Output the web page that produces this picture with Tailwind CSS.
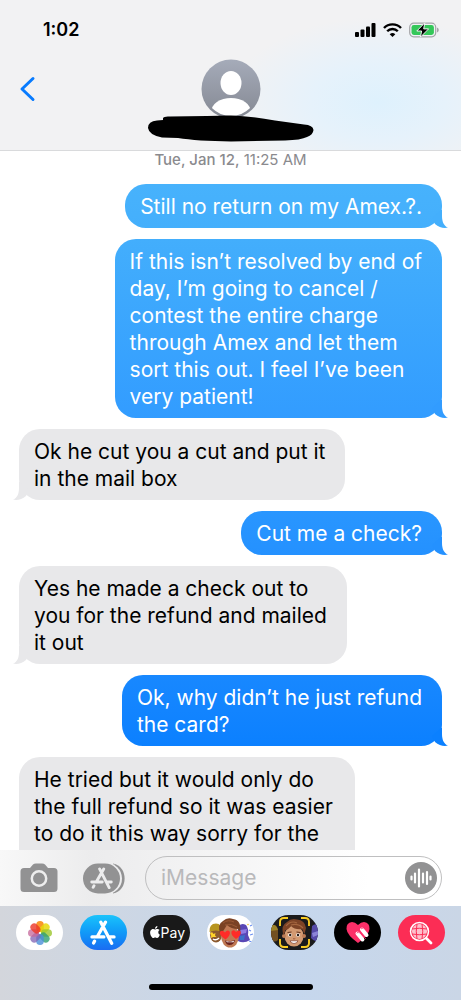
<!DOCTYPE html>
<html lang="en">
<head>
  <meta charset="UTF-8" />
  <meta name="viewport" content="width=device-width, initial-scale=1.0" />
  <title>Messages</title>
  <script src="https://cdn.jsdelivr.net/npm/@tailwindcss/browser@4"></script>
</head>
<body class="flex h-screen flex-col overflow-hidden bg-white font-['Inter',sans-serif] text-black">
  <!-- Shared shapes -->
  <svg class="hidden">
    <symbol id="tail" viewBox="0 0 16 18">
      <path d="M9 0H10V6C10 12 12 16 16 17.600C11.500 18.800 7 17.200 3 14L0 8Z" fill="currentColor" />
    </symbol>
    <symbol id="store" viewBox="0 0 24 24">
      <g fill="none" stroke="currentColor" stroke-width="3" stroke-linecap="round">
        <path d="M10 2L20 21.500M14.300 2L6.800 15.200M1.800 15.600H12.800M17.500 15.600H22.200M4.200 19.500L3.300 21.200" />
      </g>
    </symbol>
  </svg>

  <!-- Header -->
  <header class="shrink-0 border-b border-[#d9dadc] bg-[#f2f2f3] bg-[radial-gradient(ellipse_150px_85px_at_82%_68%,#def1fd_0%,#e6f2fb_45%,#f2f2f300_100%)]">
    <div class="flex h-[59px] items-center justify-between pr-[22px] pl-[43px]">
      <time class="text-[18px] font-semibold">1:02</time>
      <div class="flex items-center gap-[7px]">
        <svg class="h-[14px] w-[21px]" viewBox="0 0 21 14">
          <rect x="0" y="9" width="4" height="5" rx="1" />
          <rect x="5.500" y="6.500" width="4" height="7.500" rx="1" />
          <rect x="11" y="3.500" width="4" height="10.500" rx="1" />
          <rect x="16.500" y="0" width="4" height="14" rx="1" />
        </svg>
        <svg class="h-[14px] w-[19px]" viewBox="0 0 19 14">
          <g fill="none" stroke="#000" stroke-width="2.400">
            <path d="M1 5C5.500 .2 13.500 .2 18 5" />
            <path d="M4.200 8.300C7 5.300 12 5.300 14.800 8.300" />
          </g>
          <path d="M9.500 14L6.700 11.200Q9.500 8.600 12.300 11.200Z" />
        </svg>
        <svg class="h-[16px] w-[30px]" viewBox="0 0 30 16">
          <rect x=".7" y="1.200" width="26" height="13.600" rx="4" fill="none" stroke="#a4a5a8" stroke-width="1.200" />
          <rect x="2.500" y="3" width="22.400" height="10" rx="2.400" fill="#34c759" />
          <path d="M28 5.600Q29.800 6.300 29.800 8T28 10.400Z" fill="#a4a5a8" />
          <path d="M15.800 .8L7.800 9H12.600L11.400 15.200L19.600 6.900H14.700Z" fill="#000" stroke="#f2f3f4" stroke-width="1" />
        </svg>
      </div>
    </div>
    <div class="relative flex h-[91px] justify-center">
      <button class="absolute top-[17px] left-[19px]" aria-label="Back">
        <svg class="h-[26px] w-[17px]" viewBox="0 0 17 26">
          <path d="M14 2.500L3 13L14 23.500" fill="none" stroke="#087bfe" stroke-width="3" stroke-linecap="round" stroke-linejoin="round" />
        </svg>
      </button>
      <svg class="h-[84px] w-[168px]" viewBox="0 0 168 84">
        <defs>
          <linearGradient id="avatar" x1="0" y1="0" x2="0" y2="1">
            <stop offset="0" stop-color="#a5abb9" />
            <stop offset="1" stop-color="#858993" />
          </linearGradient>
          <clipPath id="round"><circle cx="84" cy="30" r="27" /></clipPath>
        </defs>
        <circle cx="84" cy="30" r="29.500" fill="url(#avatar)" />
        <g fill="#fff" clip-path="url(#round)">
          <ellipse cx="84" cy="24" rx="10.500" ry="12" />
          <ellipse cx="84" cy="53" rx="20" ry="14" />
        </g>
        <path d="M16 59Q17 57 23 57.500L60 57L84 56.500Q104 57 128 61.500L157 65.500Q166 66 166.500 71Q166 76 160 78Q154 81 138 81.500L84 82.500Q50 82 31 79L15 78.500Q2 76 1 69Q1 62 10 61.500L16 61Z" />
      </svg>
    </div>
  </header>

  <!-- Conversation -->
  <main class="flex min-h-0 flex-1 flex-col overflow-hidden pr-[19px] pl-[19px] text-[21px] leading-[27px] whitespace-nowrap">
    <p class="mb-4 text-center text-[15px] leading-[17px] text-[#8a8a8e]"><span class="font-medium">Tue, Jan 12,</span> 11:25 AM</p>
    <div class="flex flex-col items-start gap-[11px]">
      <div class="relative self-end rounded-[21px] bg-linear-to-b from-[#47b2fc] to-[#44affc] pt-[9px] pr-5 pb-2 pl-[15px] text-white">
        Still no return on my Amex.?.
        <svg class="absolute -right-[6px] bottom-0 h-[18px] w-4 text-[#44affc]"><use href="#tail" /></svg>
      </div>
      <div class="relative self-end rounded-[21px] bg-linear-to-b from-[#43aefc] to-[#329cff] pt-[9px] pr-5 pb-2 pl-[15px] text-white">
        If this isn’t resolved by end of<br />day, I’m going to cancel /<br />contest the entire charge<br />through Amex and let them<br />sort this out. I feel I’ve been<br />very patient!
        <svg class="absolute -right-[6px] bottom-0 h-[18px] w-4 text-[#329cff]"><use href="#tail" /></svg>
      </div>
      <div class="relative rounded-[21px] bg-[#e8e8ea] pt-[9px] pr-5 pb-2 pl-[15px]">
        Ok he cut you a cut and put it<br />in the mail box
        <svg class="absolute bottom-0 -left-[6px] h-[18px] w-4 -scale-x-100 text-[#e8e8ea]"><use href="#tail" /></svg>
      </div>
      <div class="relative self-end rounded-[21px] bg-linear-to-b from-[#2996ff] to-[#2491ff] pt-[9px] pr-5 pb-2 pl-[15px] text-white">
        Cut me a check?
        <svg class="absolute -right-[6px] bottom-0 h-[18px] w-4 text-[#2491ff]"><use href="#tail" /></svg>
      </div>
      <div class="relative rounded-[21px] bg-[#e8e8ea] pt-[9px] pr-5 pb-2 pl-[15px]">
        Yes he made a check out to<br />you for the refund and mailed<br />it out
        <svg class="absolute bottom-0 -left-[6px] h-[18px] w-4 -scale-x-100 text-[#e8e8ea]"><use href="#tail" /></svg>
      </div>
      <div class="relative self-end rounded-[21px] bg-linear-to-b from-[#1888ff] to-[#0b80ff] pt-[9px] pr-5 pb-2 pl-[15px] text-white">
        Ok, why didn’t he just refund<br />the card?
        <svg class="absolute -right-[6px] bottom-0 h-[18px] w-4 text-[#0b80ff]"><use href="#tail" /></svg>
      </div>
      <div class="relative rounded-[21px] bg-[#e8e8ea] pt-[9px] pr-5 pb-2 pl-[15px]">
        He tried but it would only do<br />the full refund so it was easier<br />to do it this way sorry for the<br />confusion and hope that helps
      </div>
    </div>
  </main>

  <!-- Message box -->
  <form class="flex h-14 shrink-0 items-center bg-linear-to-r from-[#f8f8f8] via-[#ececed] via-20% to-white to-80% pr-[19px] pl-5">
    <button type="button" class="mr-[25px]" aria-label="Camera">
      <svg class="h-[30px] w-[38px]" viewBox="0 0 38 30">
        <path d="M4 5H10L13 1.500Q14 .5 16 .5H22Q24 .5 25 1.500L28 5H34Q37.500 5 37.500 8.500V25.500Q37.500 29 34 29H4Q.5 29 .5 25.500V8.500Q.5 5 4 5Z" fill="#929293" />
        <circle cx="19" cy="15.500" r="7.200" fill="none" stroke="#eee" stroke-width="2.500" />
      </svg>
    </button>
    <button type="button" class="mr-5" aria-label="Apps">
      <svg class="h-[31px] w-[42px] text-[#ececed]" viewBox="0 0 42 31">
        <path d="M30 .5C45.500 3 45.500 28 30 30.500Z" fill="#929293" />
        <rect x="-1" y="-.5" width="40" height="32" rx="16" fill="#ececed" />
        <rect x="0" y=".5" width="37" height="30" rx="15" fill="#929293" />
        <use href="#store" x="7" y="4" width="23" height="23" />
      </svg>
    </button>
    <div class="flex h-11 min-w-0 flex-1 items-center rounded-full border border-[#bfbfc0] pr-1 pl-[15px]">
      <input type="text" aria-label="Message" placeholder="iMessage" class="min-w-0 flex-1 bg-transparent text-[21px] outline-none placeholder:text-[#b9b9bb]" />
      <button type="button" aria-label="Record audio">
        <svg class="size-8" viewBox="0 0 32 32">
          <circle cx="16" cy="16" r="16" fill="#929293" />
          <path d="M6.500 14.500V17.500M10 11.500V20.500M14 7.500V24.500M18 11.500V20.500M22 10V22M25.500 14.500V17.500" stroke="#fff" stroke-width="2.200" stroke-linecap="round" />
        </svg>
      </button>
    </div>
  </form>

  <!-- App drawer -->
  <footer class="flex h-[94px] shrink-0 flex-col items-center justify-between bg-linear-to-r from-[#d3d6dc] via-[#c5d7ee] via-60% to-[#cad6e6] pt-[9px] pb-[10px]">
    <nav class="flex w-full justify-between pr-4 pl-4">
      <button class="flex h-[35px] w-[47px] items-center justify-center rounded-full bg-white" aria-label="Photos">
        <svg class="size-[26px]" viewBox="-13 -13 26 26">
          <rect x="-3.800" y="-12" width="7.600" height="11" rx="3.800" fill="#f88d14" fill-opacity=".9" />
          <rect x="-3.800" y="-12" width="7.600" height="11" rx="3.800" fill="#e8d80c" fill-opacity=".85" transform="rotate(45)" />
          <rect x="-3.800" y="-12" width="7.600" height="11" rx="3.800" fill="#9bc62c" fill-opacity=".8" transform="rotate(90)" />
          <rect x="-3.800" y="-12" width="7.600" height="11" rx="3.800" fill="#2fa070" fill-opacity=".8" transform="rotate(135)" />
          <rect x="-3.800" y="-12" width="7.600" height="11" rx="3.800" fill="#4a8fd8" fill-opacity=".8" transform="rotate(180)" />
          <rect x="-3.800" y="-12" width="7.600" height="11" rx="3.800" fill="#7f60b3" fill-opacity=".75" transform="rotate(225)" />
          <rect x="-3.800" y="-12" width="7.600" height="11" rx="3.800" fill="#c4669a" fill-opacity=".75" transform="rotate(270)" />
          <rect x="-3.800" y="-12" width="7.600" height="11" rx="3.800" fill="#ec3426" fill-opacity=".8" transform="rotate(315)" />
        </svg>
      </button>
      <button class="flex h-[35px] w-[47px] items-center justify-center rounded-full bg-linear-to-b from-[#1cc3fb] to-[#1b6cf2] text-white" aria-label="App Store">
        <svg class="size-[26px]"><use href="#store" /></svg>
      </button>
      <button class="flex h-[35px] w-[47px] items-center justify-center rounded-full bg-[#191919] text-[14px] text-white" aria-label="Apple Pay">
        <svg class="mb-px size-3" viewBox="0 0 24 24" fill="currentColor">
          <path d="M12.152 6.896c-.948 0-2.415-1.078-3.960-1.040-2.040.027-3.910 1.183-4.961 3.014-2.117 3.675-.546 9.103 1.519 12.090 1.013 1.454 2.208 3.090 3.792 3.039 1.520-.065 2.090-.987 3.935-.987 1.831 0 2.350.987 3.960.948 1.637-.026 2.676-1.480 3.676-2.948 1.156-1.688 1.636-3.325 1.662-3.415-.039-.013-3.182-1.221-3.220-4.857-.026-3.040 2.480-4.494 2.597-4.559-1.429-2.090-3.623-2.324-4.390-2.376-2-.156-3.675 1.090-4.610 1.090zM15.530 3.830c.843-1.012 1.400-2.427 1.245-3.830-1.207.052-2.662.805-3.532 1.818-.780.896-1.454 2.338-1.273 3.714 1.338.104 2.715-.688 3.559-1.701" />
        </svg>
        <span>Pay</span>
      </button>
      <button class="h-[35px] w-[47px] overflow-hidden rounded-full bg-white" aria-label="Memoji stickers">
        <svg class="h-[35px] w-[47px]" viewBox="0 0 47 35">
          <!-- left friend -->
          <ellipse cx="9" cy="19.500" rx="6" ry="8" fill="#8c5a2f" />
          <path d="M2.500 17Q2 8.500 9 8.500Q15 8.500 15 17Q9 14 2.500 17Z" fill="#b8951f" />
          <path d="M5 17L6.500 19L8.500 18L8 20.500L9.500 22H6L4 23L4.200 20.500L3 18.500Z" fill="#ffd42a" />
          <path d="M6 24Q9 26 12 23" fill="none" stroke="#fff" stroke-width="1.400" />
          <!-- right friend -->
          <path d="M31 12Q34 7 39 10Q42 14 41 20L43 25Q37 29 31 26Z" fill="#5947b5" />
          <path d="M33 15L40 14L39 18L34 19Z" fill="#8f7be4" />
          <path d="M33 21L38 20L37 25H33Z" fill="#3a70c9" />
          <path d="M43 11L45 10M42 15L44 16M43 20L46 19M42 26L45 27" stroke="#6c91f0" stroke-width="1.200" />
          <circle cx="41" cy="9.500" r=".8" fill="#f7c52e" />
          <!-- front face -->
          <ellipse cx="23" cy="21" rx="9" ry="11.500" fill="#c07a55" />
          <path d="M13 19Q10 9 16 6Q20 2 26 4Q35 5 33 18L31 14Q24 14 20 10Q17 15 14 19Z" fill="#7a4224" />
          <path d="M16 8Q21 4 27 7M18 10Q25 8 30 12" fill="none" stroke="#9c5a36" stroke-width="1" />
          <path d="M18.500 24.500Q11.500 20 13 16.800Q15.500 14.300 18 17.500Q20.500 14 22.800 16.800Q23.800 20.500 18.500 24.500Z" fill="#ff2b28" />
          <path d="M29 24Q23.500 20 24.500 16.500Q27 14 29 17Q31.500 14 33.800 16.800Q34.500 20.500 29 24Z" fill="#ff2b28" />
          <path d="M18 25.500Q23 27 28 25Q27 30 22.500 30Q19 30 18 25.500Z" fill="#6c2520" />
          <path d="M19 26Q23 27.500 27 25.700L26.500 27.300H20Z" fill="#fff" />
        </svg>
      </button>
      <button class="h-[35px] w-[47px] overflow-hidden rounded-full bg-[#1b1b1c]" aria-label="Memoji">
        <svg class="h-[35px] w-[47px]" viewBox="0 0 47 35">
          <path d="M0 11Q5 8 7 15V25Q4 28 0 25Z" fill="#735021" />
          <path d="M0 11Q5 8 7 15L0 16Z" fill="#9c8127" />
          <path d="M41 11Q44 8 47 10V26Q43 27 40 23Z" fill="#554aa8" />
          <path d="M41 18L47 16V20L42 22Z" fill="#8b84d7" />
          <ellipse cx="23" cy="21" rx="9.500" ry="10.500" fill="#d39a72" />
          <circle cx="13" cy="21" r="2" fill="#be7c56" />
          <circle cx="33" cy="21" r="2" fill="#be7c56" />
          <path d="M12 19Q10 10 16 7Q20 3 26 4.500Q34 5 35 13L33.500 19L31 14Q24 15 20 11Q17 15 14.500 15L13 20Z" fill="#7d4326" />
          <path d="M15 11Q20 5 26 8M20 10Q27 8 32 13" fill="none" stroke="#a66740" stroke-width="1.100" />
          <ellipse cx="19" cy="20" rx="1.900" ry="1.700" fill="#fff" />
          <ellipse cx="27" cy="20" rx="1.900" ry="1.700" fill="#fff" />
          <circle cx="19.200" cy="20" r="1.200" fill="#281d19" />
          <circle cx="27" cy="20" r="1.200" fill="#281d19" />
          <path d="M16.500 17.500L20.500 17M25.500 17L29.500 17.500" stroke="#5f321e" stroke-width="1" />
          <path d="M22 23.500Q23 24.500 24.300 23.500" fill="none" stroke="#98563a" stroke-width=".9" />
          <path d="M19 25.800H27Q26 28.500 23 28.500T19 25.800Z" fill="#fff" stroke="#7b392c" stroke-width=".7" />
          <path d="M9 11V7Q9 3 13 3H17M30 3H34Q38 3 38 7V11M9 24V28Q9 32 13 32H17M30 32H34Q38 32 38 28V24" fill="none" stroke="#f8cb22" stroke-width="1.900" />
        </svg>
      </button>
      <button class="flex h-[35px] w-[47px] items-center justify-center rounded-full bg-black" aria-label="Digital Touch">
        <svg class="h-[23px] w-6" viewBox="0 0 24 23">
          <path d="M12 4Q9 1 6 1Q0 2 .5 8Q1 14 12 22Q23 14 23.500 8Q24 2 18 1Q15 1 12 4Z" fill="#fb2f68" />
          <g stroke="#fff" stroke-width="4" stroke-linecap="round">
            <path d="M11.500 12.500L16.500 18.500M16 8.500L20.500 14" />
          </g>
          <path d="M10.700 12.300L12 11.200L13 12.300M15 8.100L16.400 7L17.400 8.200" fill="none" stroke="#fb2f68" stroke-width=".8" />
          <path d="M14.200 11.200L20 18" stroke="#fb2f68" stroke-width=".8" />
        </svg>
      </button>
      <button class="flex h-[35px] w-[47px] items-center justify-center rounded-full bg-[#fc2d55] text-white" aria-label="Image search">
        <svg class="size-6" viewBox="0 0 24 24" fill="none" stroke="currentColor">
          <circle cx="10.500" cy="10.500" r="7.500" fill="#fff" fill-opacity=".7" stroke="none" />
          <g stroke="#fc2d55" stroke-width="1"><path d="M8 3Q6.500 10 8 18M13 3Q14.500 10 13 18M3 8Q10 6.500 18 8M3 13Q10 14.500 18 13" /></g>
          <circle cx="10.500" cy="10.500" r="9" stroke-width="1.500" />
          <path d="M17.500 17.500L22 22" stroke-width="2.800" stroke-linecap="round" />
        </svg>
      </button>
    </nav>
    <div class="h-[6px] w-[164px] rounded-full bg-black"></div>
  </footer>
</body>
</html>
